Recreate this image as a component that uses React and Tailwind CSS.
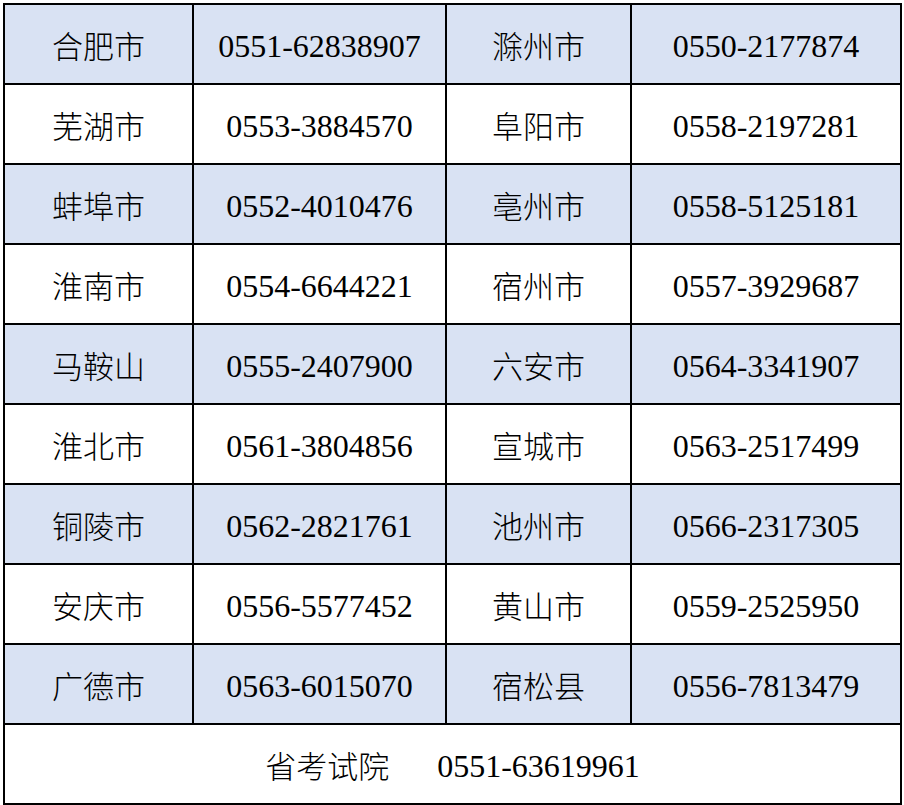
import React from "react";

const rows = [
  ["合肥市", "0551-62838907", "滁州市", "0550-2177874"],
  ["芜湖市", "0553-3884570", "阜阳市", "0558-2197281"],
  ["蚌埠市", "0552-4010476", "亳州市", "0558-5125181"],
  ["淮南市", "0554-6644221", "宿州市", "0557-3929687"],
  ["马鞍山", "0555-2407900", "六安市", "0564-3341907"],
  ["淮北市", "0561-3804856", "宣城市", "0563-2517499"],
  ["铜陵市", "0562-2821761", "池州市", "0566-2317305"],
  ["安庆市", "0556-5577452", "黄山市", "0559-2525950"],
  ["广德市", "0563-6015070", "宿松县", "0556-7813479"],
];

function NameCell({ bg, children }) {
  return (
    <div className={`${bg} flex items-center justify-center pt-[3px] text-[31px] font-light font-['Noto_Sans_CJK_SC',sans-serif]`}>
      {children}
    </div>
  );
}

function NumCell({ bg, children }) {
  return (
    <div className={`${bg} flex items-center justify-center pt-[3px] text-[32px] font-['Liberation_Serif',serif]`}>
      {children}
    </div>
  );
}

export default function App() {
  return (
    <div className="w-[904px] h-[805px] bg-white pt-[3px] pl-[3px]">
      <div className="grid w-[899px] grid-cols-[187px_251px_183px_268px] auto-rows-[78px] gap-[2px] bg-black p-[2px] text-black">
        {rows.map((r, i) => {
          const bg = i % 2 === 0 ? "bg-[#d9e2f3]" : "bg-white";
          return (
            <React.Fragment key={i}>
              <NameCell bg={bg}>{r[0]}</NameCell>
              <NumCell bg={bg}>{r[1]}</NumCell>
              <NameCell bg={bg}>{r[2]}</NameCell>
              <NumCell bg={bg}>{r[3]}</NumCell>
            </React.Fragment>
          );
        })}
        <div className="col-span-4 bg-white flex items-center justify-center gap-[48px] pt-[3px]">
          <span className="text-[31px] font-light font-['Noto_Sans_CJK_SC',sans-serif]">省考试院</span>
          <span className="text-[32px] font-['Liberation_Serif',serif]">0551-63619961</span>
        </div>
      </div>
    </div>
  );
}
